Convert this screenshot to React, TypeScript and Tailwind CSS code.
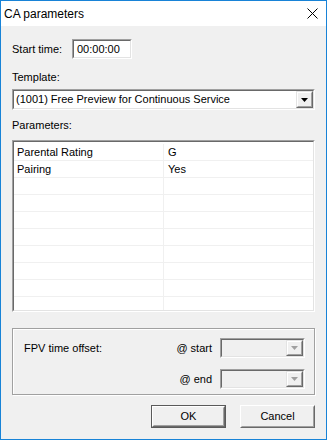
import React from "react";

function Sunken({ className = "", inner = "bg-white", children }: { className?: string; inner?: string; children?: React.ReactNode }) {
  return (
    <div className={"border border-t-[#a0a0a0] border-l-[#a0a0a0] border-r-white border-b-white " + className}>
      <div className={"h-full w-full border border-t-[#696969] border-l-[#696969] border-r-[#e3e3e3] border-b-[#e3e3e3] " + inner}>
        {children}
      </div>
    </div>
  );
}

function DropBtn({ disabled }: { disabled?: boolean }) {
  return (
    <div className="h-full w-[17px] border border-t-[#e3e3e3] border-l-[#e3e3e3] border-r-[#696969] border-b-[#696969]">
      <div className="h-full w-full border border-t-white border-l-white border-r-[#a0a0a0] border-b-[#a0a0a0] bg-[#f0f0f0] flex items-center justify-center">
        <svg width="7" height="4" viewBox="0 0 7 4">
          <path d="M0 0H7L3.5 4Z" fill={disabled ? "#a0a0a0" : "#000"} />
        </svg>
      </div>
    </div>
  );
}

function Combo({ className = "", disabled, text }: { className?: string; disabled?: boolean; text?: string }) {
  return (
    <Sunken className={className} inner={disabled ? "bg-[#f0f0f0]" : "bg-white"}>
      <div className="flex h-full items-center">
        <div className="flex-1 pl-[2px] whitespace-nowrap overflow-hidden">{text}</div>
        <DropBtn disabled={disabled} />
      </div>
    </Sunken>
  );
}

function Button({ label, isDefault }: { label: string; isDefault?: boolean }) {
  const core = (
    <div className="h-full w-full border border-t-white border-l-white border-r-[#696969] border-b-[#696969]">
      <div className="h-full w-full border border-t-[#f0f0f0] border-l-[#f0f0f0] border-r-[#a0a0a0] border-b-[#a0a0a0] bg-[#f0f0f0] flex items-center justify-center">
        {label}
      </div>
    </div>
  );
  return (
    <div className={"w-[75px] h-[23px] " + (isDefault ? "border border-[#5a5a5a]" : "")}>{core}</div>
  );
}

const rows: [string, string][] = [
  ["Parental Rating", "G"],
  ["Pairing", "Yes"],
  ["", ""],
  ["", ""],
  ["", ""],
  ["", ""],
  ["", ""],
  ["", ""],
  ["", ""],
  ["", ""],
];

export default function App() {
  return (
    <div
      className="w-[327px] h-[440px] border border-[#1883d7] bg-[#f0f0f0] flex flex-col text-[11px] leading-[13px] text-black"
      style={{ fontFamily: '"Liberation Sans", Arial, sans-serif' }}
    >
      <div className="h-[25px] bg-white flex items-center justify-between pl-[3px] pr-[8px] shrink-0">
        <span className="text-[12px] leading-[14px]">CA parameters</span>
        <svg width="11" height="11" viewBox="0 0 11 11">
          <path d="M0.5 0.5L10.5 10.5M10.5 0.5L0.5 10.5" stroke="#000" strokeWidth="1" />
        </svg>
      </div>

      <div className="flex flex-col px-[11px]">
        <div className="mt-[13px] flex items-center h-[20px]">
          <span className="w-[60px]">Start time:</span>
          <Sunken className="w-[60px] h-[20px]">
            <div className="h-full flex items-center pl-[3px]">00:00:00</div>
          </Sunken>
        </div>

        <div className="mt-[12px] h-[13px]">Template:</div>
        <Combo className="mt-[5px] h-[21px]" text="(1001) Free Preview for Continuous Service" />

        <div className="mt-[9px] h-[13px]">Parameters:</div>
        <Sunken className="mt-[8px] h-[172px]">
          <div className="h-full overflow-hidden pt-[2px]">
            {rows.map((r, i) => (
              <div key={i} className="flex h-[17px] border-b border-[#f0f0f0]">
                <div className="w-[150px] border-r border-[#f0f0f0] pl-[3px] flex items-center whitespace-nowrap">{r[0]}</div>
                <div className="flex-1 pl-[4px] flex items-center">{r[1]}</div>
              </div>
            ))}
          </div>
        </Sunken>

        <div className="mt-[16px] h-[67px] border border-[#a0a0a0] shadow-[inset_1px_1px_0_#fff,1px_1px_0_#fff] flex flex-col pt-[9px] gap-[11px]">
          <div className="flex items-center h-[20px]">
            <span className="flex-1 pl-[11px]">FPV time offset:</span>
            <span className="mr-[8px]">@ start</span>
            <Combo className="w-[85px] h-[20px] mr-[9px]" disabled />
          </div>
          <div className="flex items-center justify-end h-[20px]">
            <span className="mr-[8px]">@ end</span>
            <Combo className="w-[85px] h-[20px] mr-[9px]" disabled />
          </div>
        </div>

        <div className="mt-[10px] flex justify-end gap-[14px]">
          <Button label="OK" isDefault />
          <Button label="Cancel" />
        </div>
      </div>
    </div>
  );
}
